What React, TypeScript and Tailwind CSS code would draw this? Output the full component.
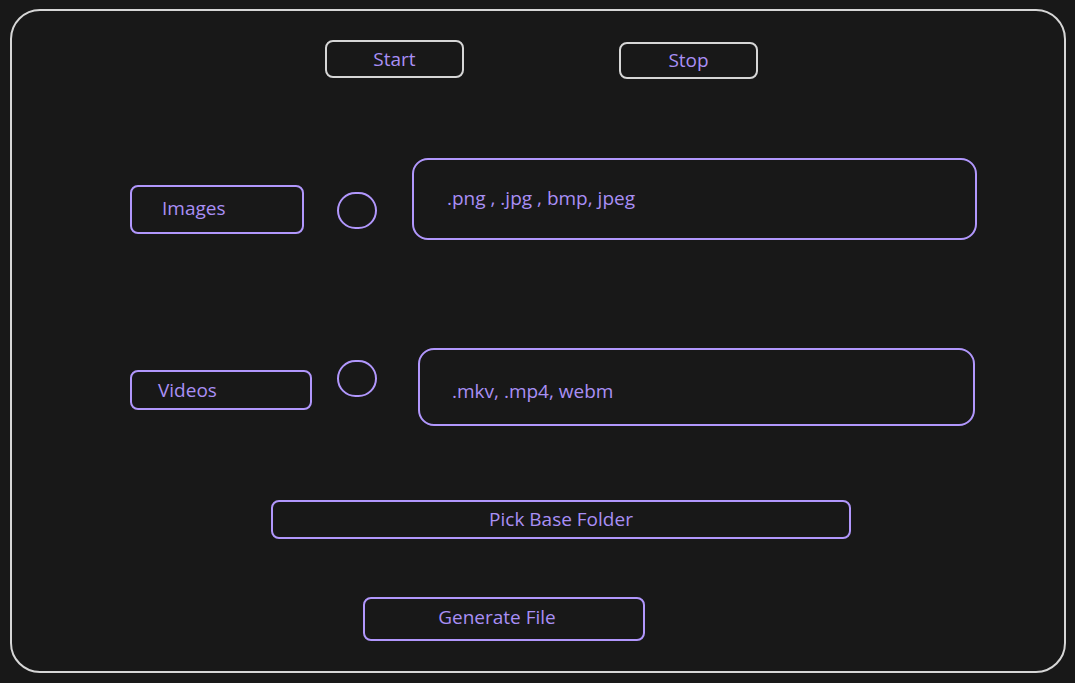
import React from "react";

const font = { fontFamily: "'Open Sans', Lato, sans-serif" };

const violet = "border-2 border-[#b197fc] text-[#a98ff5]";

const Oval = ({ className = "" }: { className?: string }) => (
  <div className={`w-[40px] h-[37px] rounded-full border-2 border-[#b197fc] ${className}`} />
);

export default function App() {
  return (
    <div
      className="w-[1075px] h-[683px] bg-[#181818] pt-[9px] pl-[10px] text-[19px] leading-none"
      style={font}
    >
      <div className="w-[1056px] h-[664px] border-2 border-[#d6d6d6] rounded-[30px] flex flex-col">
        {/* Start / Stop */}
        <div className="flex items-start mt-[29px]">
          <button className="ml-[313px] w-[139px] h-[38px] rounded-lg border-2 border-[#d6d6d6] text-[#a98ff5] flex items-center justify-center">
            Start
          </button>
          <button className="ml-[155px] mt-[2px] w-[139px] h-[37px] rounded-lg border-2 border-[#d6d6d6] text-[#a98ff5] flex items-center justify-center">
            Stop
          </button>
        </div>

        {/* Images */}
        <div className="flex items-start mt-[79px]">
          <div className={`ml-[118px] mt-[27px] w-[174px] h-[49px] rounded-lg ${violet} flex items-center pl-[30px] pb-[2px]`}>
            Images
          </div>
          <Oval className="ml-[33px] mt-[34px]" />
          <div className={`ml-[35px] w-[565px] h-[82px] rounded-2xl ${violet} flex items-center pl-[33px] pb-[2px]`}>
            .png , .jpg , bmp, jpeg
          </div>
        </div>

        {/* Videos */}
        <div className="flex items-start mt-[108px]">
          <div className={`ml-[118px] mt-[22px] w-[182px] h-[40px] rounded-lg ${violet} flex items-center pl-[26px]`}>
            Videos
          </div>
          <Oval className="ml-[25px] mt-[12px]" />
          <div className={`ml-[41px] w-[557px] h-[78px] rounded-2xl ${violet} flex items-center pl-[32px] pt-[8px]`}>
            .mkv, .mp4, webm
          </div>
        </div>

        {/* Pick Base Folder */}
        <button className={`ml-[259px] mt-[74px] w-[580px] h-[39px] rounded-lg ${violet} flex items-center justify-center`}>
          Pick Base Folder
        </button>

        {/* Generate File */}
        <button className={`ml-[351px] mt-[58px] w-[282px] h-[44px] rounded-lg ${violet} flex items-center justify-center pr-[14px] pb-[3px]`}>
          Generate File
        </button>
      </div>
    </div>
  );
}
